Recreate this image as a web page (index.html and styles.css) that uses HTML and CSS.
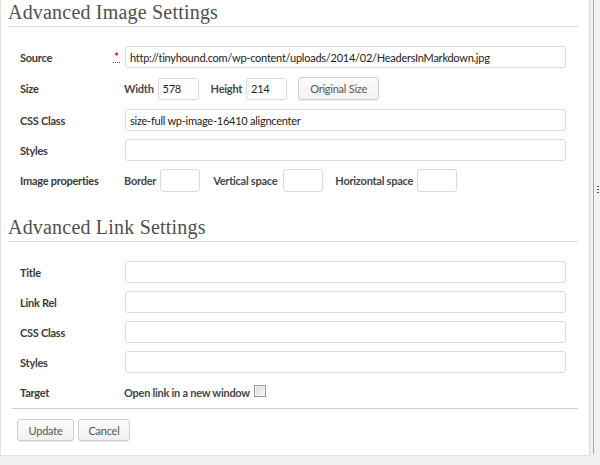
FILE: index.html
```html
<!DOCTYPE html>
<html lang="en">
<head>
<meta charset="utf-8">
<title>Advanced Settings</title>
<link rel="stylesheet" href="styles.css">
</head>
<body>
<div class="screen">
  <div class="panel">
    <h2 class="section-title">Advanced Image Settings</h2>
    <div class="form-grid image-grid">
      <div class="lbl lbl-req"><span>Source</span><abbr class="req" title="required">*</abbr></div>
      <div class="field"><input class="text full" type="text" value="http://tinyhound.com/wp-content/uploads/2014/02/HeadersInMarkdown.jpg"></div>

      <div class="lbl">Size</div>
      <div class="field inline size-field">
        <span class="sub-lbl">Width</span><input class="text small" type="text" value="578">
        <span class="sub-lbl">Height</span><input class="text small" type="text" value="214">
        <button class="btn btn-orig" type="button">Original Size</button>
      </div>

      <div class="lbl">CSS Class</div>
      <div class="field"><input class="text full" type="text" value="size-full wp-image-16410 aligncenter"></div>

      <div class="lbl">Styles</div>
      <div class="field"><input class="text full" type="text" value=""></div>

      <div class="lbl">Image properties</div>
      <div class="field inline props-field">
        <span class="sub-lbl">Border</span><input class="text small tall" type="text" value="">
        <span class="sub-lbl wide-gap">Vertical space</span><input class="text small tall" type="text" value="">
        <span class="sub-lbl">Horizontal space</span><input class="text small tall" type="text" value="">
      </div>
    </div>

    <h2 class="section-title second">Advanced Link Settings</h2>
    <div class="form-grid link-grid">
      <div class="lbl">Title</div>
      <div class="field"><input class="text full" type="text" value=""></div>

      <div class="lbl">Link Rel</div>
      <div class="field"><input class="text full" type="text" value=""></div>

      <div class="lbl">CSS Class</div>
      <div class="field"><input class="text full" type="text" value=""></div>

      <div class="lbl">Styles</div>
      <div class="field"><input class="text full" type="text" value=""></div>

      <div class="lbl">Target</div>
      <div class="field inline"><span class="sub-lbl check-lbl">Open link in a new window</span><input class="check" type="checkbox"></div>
    </div>

    <div class="divider"></div>
    <div class="actions">
      <button class="btn" type="button">Update</button>
      <button class="btn" type="button">Cancel</button>
    </div>
  </div>
  <div class="splitter"><span class="grip"></span></div>
</div>
</body>
</html>
```
FILE: styles.css
```css
html, body {
  margin: 0;
  padding: 0;
}
body {
  background: #f1f1f1;
  font-family: "Lato", "Liberation Sans", sans-serif;
  font-size: 11px;
  letter-spacing: -0.25px;
  color: #333;
}
.screen {
  display: flex;
  align-items: flex-start;
  height: 465px;
  overflow: hidden;
}
.panel {
  width: 588px;
  height: 455px;
  background: #fff;
  border-left: 1px solid #e2e2e2;
  border-right: 1px solid #dcdcdc;
  border-bottom: 1px solid #e4e4e4;
  flex: none;
}
.section-title {
  margin: 0 11px 0 7px;
  padding: 0 0 2px;
  font-family: "Liberation Serif", "Times New Roman", serif;
  font-weight: normal;
  font-size: 20px;
  line-height: 24px;
  letter-spacing: 0.2px;
  color: #505050;
  border-bottom: 1px solid #dedede;
}
.section-title.second {
  margin-top: 23px;
}
.form-grid {
  display: grid;
  grid-template-columns: 105px 1fr;
  row-gap: 8px;
  margin: 19px 23px 0 19px;
}
.image-grid {
  grid-template-rows: 22px 25px 22px 22px 23px;
}
.link-grid {
  grid-auto-rows: 22px;
}
.lbl {
  display: flex;
  align-items: center;
  font-weight: 700;
  color: #3a3a3a;
}
.lbl-req {
  justify-content: space-between;
}
.req {
  text-decoration: none;
  color: #e00;
  font-size: 11px;
  font-weight: 700;
  line-height: 8px;
  height: 8px;
  margin: 2px 5px 0 0;
  padding: 0 1px 1px;
  border-bottom: 1px dotted #e00;
  letter-spacing: 0;
}
.field {
  display: flex;
  align-items: center;
  min-width: 0;
}
.inline .sub-lbl {
  font-weight: 700;
  color: #44474b;
  margin-left: -1px;
  margin-right: 4px;
}
.inline .sub-lbl ~ .sub-lbl {
  margin-left: 12px;
}
.props-field .sub-lbl.wide-gap {
  margin-left: 13px;
  margin-right: 6px;
}
.text {
  box-sizing: border-box;
  height: 22px;
  border: 1px solid #dadada;
  border-radius: 3px;
  padding: 0 4px;
  font-family: inherit;
  font-size: 11px;
  letter-spacing: -0.25px;
  color: #222;
  background: #fff;
  outline: none;
  margin: 0;
}
.text.full {
  width: 100%;
}
.text.small {
  width: 41px;
}
.text.tall {
  height: 23px;
  width: 40px;
}
.btn {
  box-sizing: border-box;
  height: 22px;
  padding: 0 10px;
  border: 1px solid #cfcfcf;
  border-radius: 3px;
  background: linear-gradient(#fcfcfc, #f1f1f1);
  box-shadow: 0 1px 1px rgba(0, 0, 0, 0.08);
  font-family: inherit;
  font-size: 11px;
  letter-spacing: -0.25px;
  color: #555;
  margin: 0;
}
.btn-orig {
  margin-left: 11px;
  height: 23px;
  width: 81px;
  padding: 0;
}
.check-lbl {
  margin-right: 4px;
}
.check {
  appearance: none;
  -webkit-appearance: none;
  box-sizing: border-box;
  width: 12px;
  height: 12px;
  margin: -2px 0 0;
  border: 1px solid #9a9a9a;
  background: linear-gradient(135deg, #dcdcdc, #f6f6f6);
  box-shadow: inset 0 0 0 1px #f4f4f4;
}
.divider {
  height: 1px;
  background: #cdcdcd;
  margin: 5px 11px 0 11px;
}
.actions {
  display: flex;
  gap: 4px;
  margin: 10px 0 0 16px;
}
.actions .btn:first-child {
  width: 57px;
  padding: 0;
}
.actions .btn:last-child {
  width: 52px;
  padding: 0;
}
.splitter {
  position: relative;
  flex: none;
  width: 9px;
  height: 454px;
  margin-left: 3px;
  border-left: 1px solid #a8a8a8;
  box-sizing: border-box;
}
.grip {
  position: absolute;
  left: 3px;
  top: 186px;
  width: 2px;
  height: 7px;
  background: repeating-linear-gradient(#555 0 1px, transparent 1px 3px);
}
```
